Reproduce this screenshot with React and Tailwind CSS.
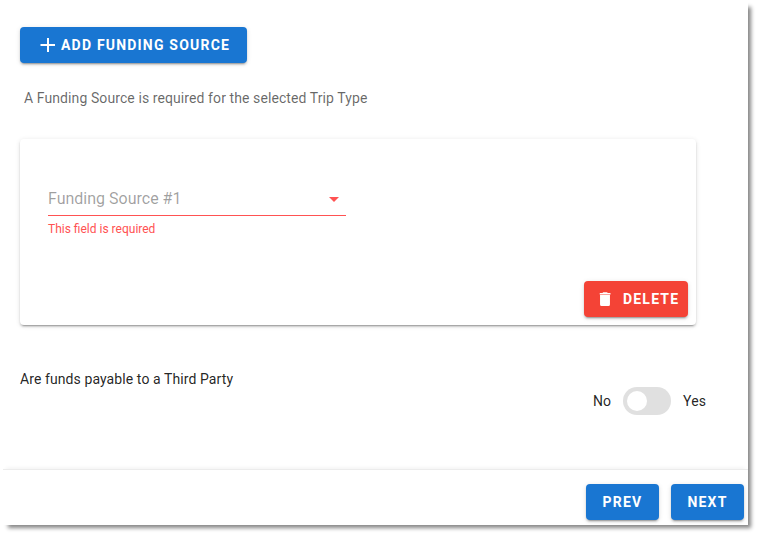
import { useState } from 'react'

const ELEVATION = 'shadow-[0_3px_1px_-2px_rgba(0,0,0,0.2),0_2px_2px_0_rgba(0,0,0,0.14),0_1px_5px_0_rgba(0,0,0,0.12)]'

const Button = ({ className, children, ...props }) => (
  <button
    className={`h-9 flex items-center rounded text-sm font-bold uppercase tracking-[1.2px] text-white whitespace-nowrap ${ELEVATION} ${className}`}
    {...props}
  >
    {children}
  </button>
)

const FundingSourceCard = () => (
  <div className={`w-[676px] h-[186px] mt-[31px] ml-[17px] pl-7 pr-2 pt-[46px] pb-2 flex flex-col justify-between rounded bg-white ${ELEVATION}`}>
    <div className="w-[298px]">
      <div className="h-[31px] pb-0.5 flex items-center justify-between border-b border-[#ff5252]">
        <span className="text-base leading-5 text-black/38">Funding Source #1</span>
        <svg className="w-6 h-6 text-[#ff5252]" viewBox="0 0 24 24" fill="currentColor">
          <path d="M7 10l5 5 5-5z" />
        </svg>
      </div>
      <p className="mt-[7px] text-xs leading-3 text-[#ff5252]">This field is required</p>
    </div>

    <Button className="self-end w-[104px] pl-3 bg-[#f44336]">
      <svg className="w-[18px] h-[18px] mr-[9px]" viewBox="0 0 24 24" fill="currentColor">
        <path d="M19.3 4h-3.6l-1-1H9.6l-1 1H5v2h14.3M5.4 19.3a2 2 0 0 0 2 2h9.2a2 2 0 0 0 2-2V6.7H5.4z" />
      </svg>
      Delete
    </Button>
  </div>
)

const App = () => {
  const [thirdParty, setThirdParty] = useState(false)

  return (
    <div className="h-[534px] pt-0.5 pl-[3px] bg-white overflow-hidden font-['Roboto',sans-serif]">
      <div className="w-[745px] h-[523px] flex flex-col bg-white shadow-[4px_4px_4px_-1px_rgba(0,0,0,0.48)]">
        <main className="h-[467px] pt-[25px]">
          <Button className="w-[227px] ml-[17px] pl-4 bg-[#1976d2]">
            <svg className="w-6 h-6 mr-px" viewBox="0 0 24 24" fill="none" stroke="currentColor" strokeWidth="2">
              <path d="M12 5v14M4.5 12h14.5" />
            </svg>
            Add Funding Source
          </Button>

          <p className="mt-[25px] ml-[21px] text-sm leading-5 tracking-[0.09px] text-black/60">
            A Funding Source is required for the selected Trip Type
          </p>

          <FundingSourceCard />

          <p className="mt-11 ml-[17px] text-sm leading-5 tracking-[0.09px] text-black/87">
            Are funds payable to a Third Party
          </p>

          <div className="-mt-0.5 mr-[42px] flex items-center justify-end text-sm tracking-[0.09px] text-black/87">
            <span>No</span>
            <button
              role="switch"
              aria-checked={thirdParty}
              onClick={() => setThirdParty(!thirdParty)}
              className={`w-12 h-7 mx-3 p-1 flex items-center rounded-full bg-[#e0e0e0] ${thirdParty ? 'justify-end' : ''}`}
            >
              <span className="w-5 h-5 rounded-full bg-white" />
            </button>
            <span>Yes</span>
          </div>
        </main>

        <footer className="flex-1 flex items-start justify-end gap-3 pt-[14px] pr-1 border-t border-[#ececec] shadow-[0_-4px_4px_-3px_rgba(0,0,0,0.06)]">
          <Button className="w-[73px] justify-center bg-[#1976d2]">Prev</Button>
          <Button className="w-[73px] justify-center bg-[#1976d2]">Next</Button>
        </footer>
      </div>
    </div>
  )
}

export default App
